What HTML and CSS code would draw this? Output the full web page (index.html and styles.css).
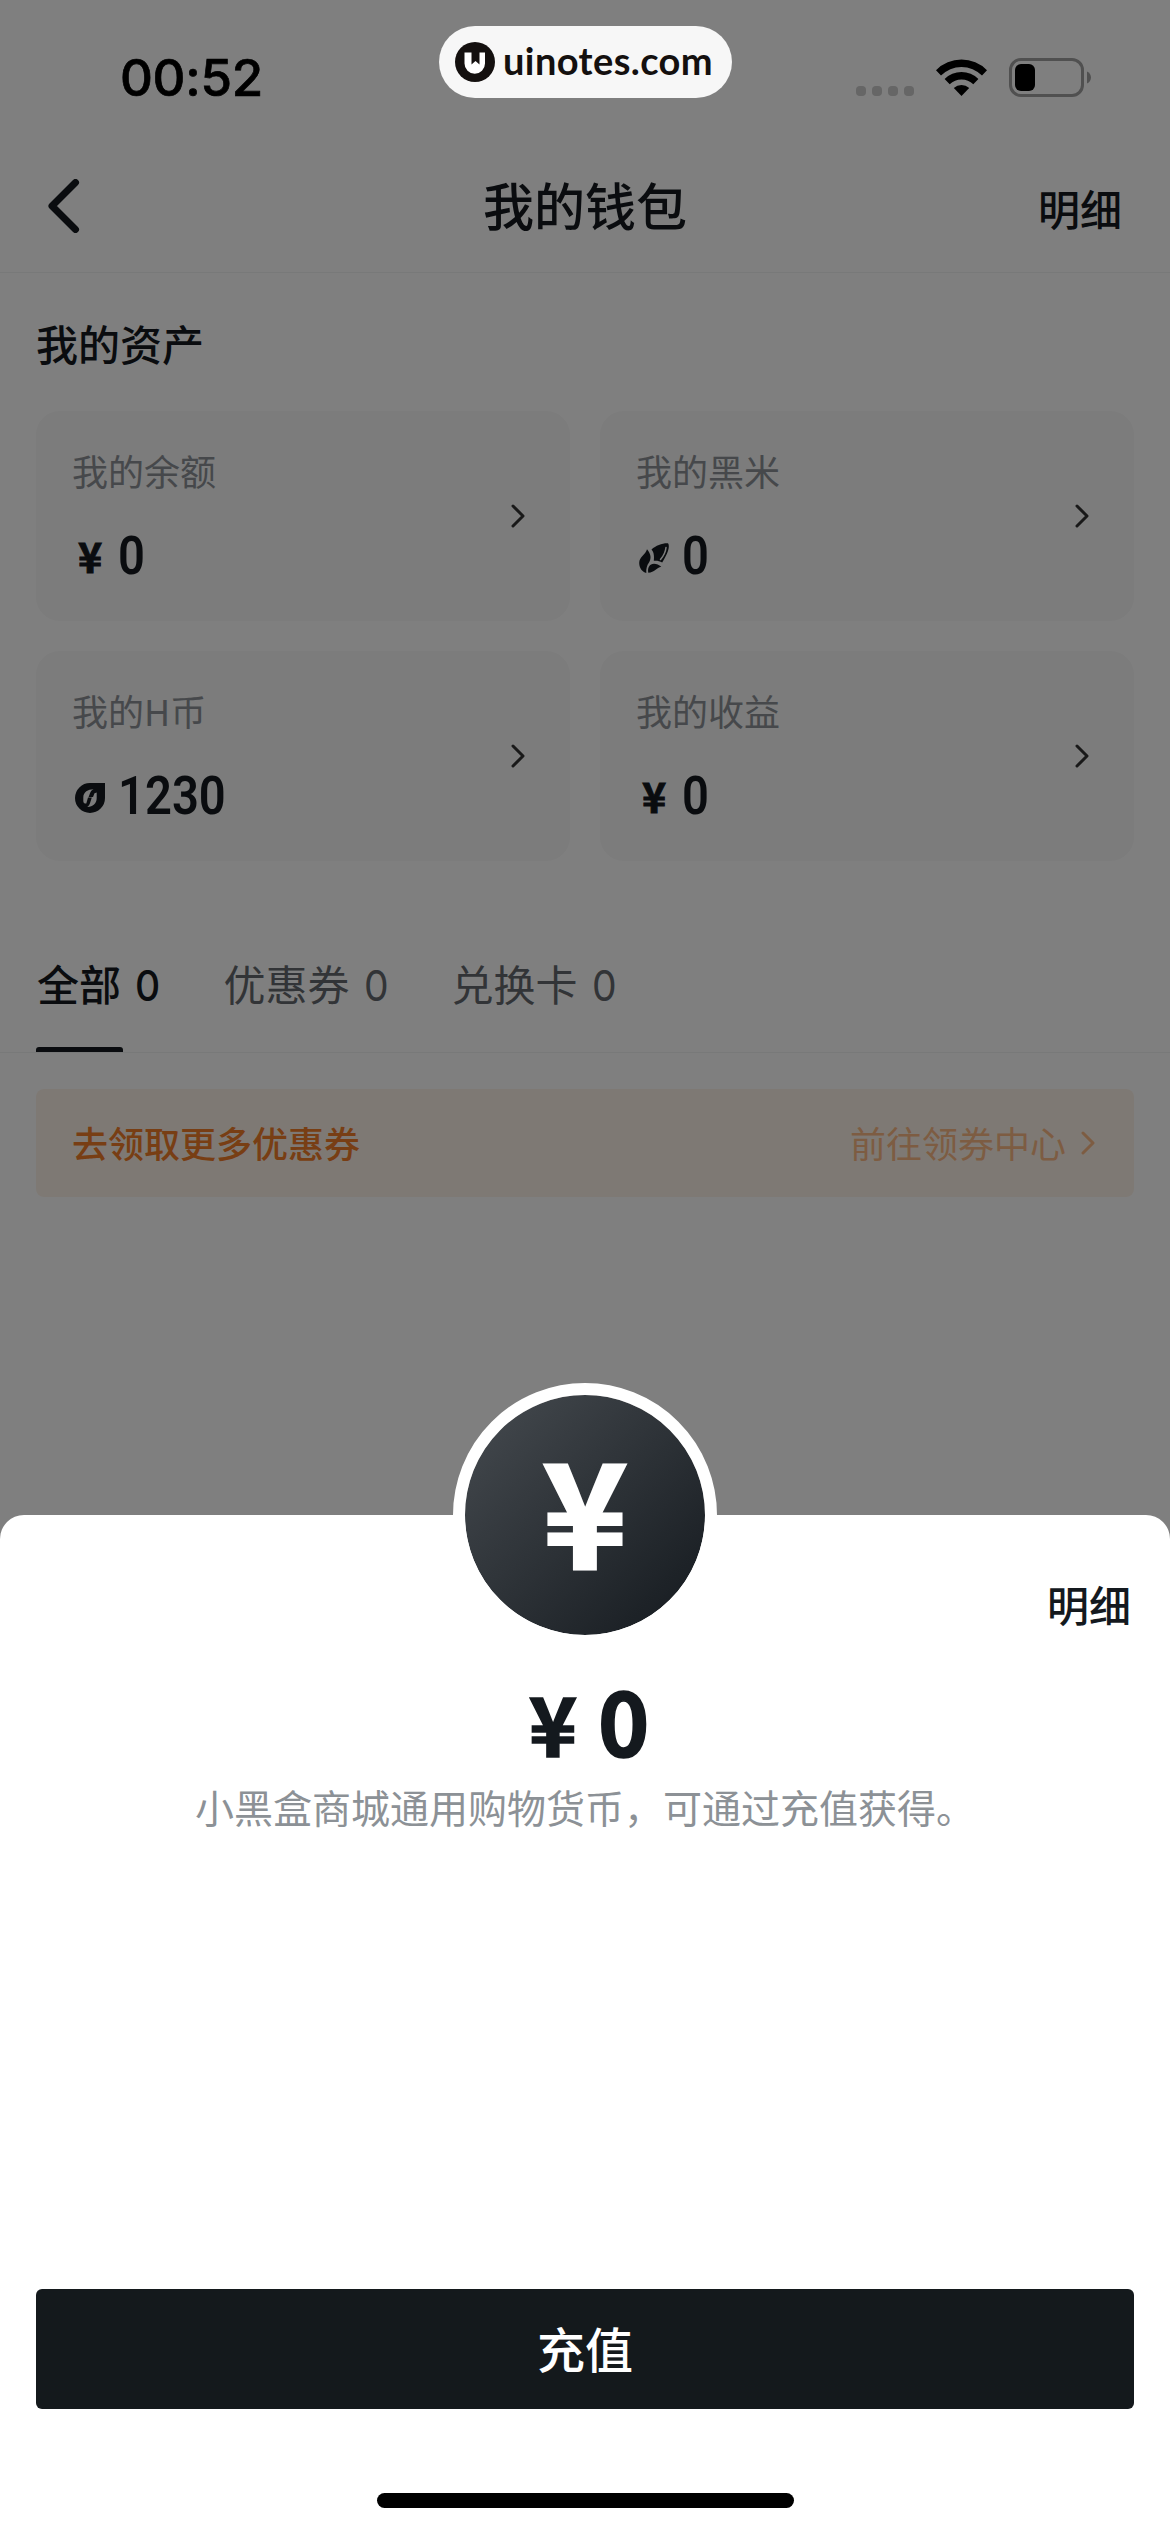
FILE: index.html
```html
<!DOCTYPE html>
<html lang="zh-CN">
<head>
<meta charset="utf-8">
<title>我的钱包</title>
<link rel="stylesheet" href="styles.css">
</head>
<body>
<div class="screen">
  <header class="status">
    <span class="time">00:52</span>
    <div class="indicators">
      <span class="signal"><i></i><i></i><i></i><i></i></span>
      <svg class="wifi" viewBox="0 0 51 37">
        <path d="M0 11.2A36 36 0 0 1 51 11.2L46 16.600A28.500 28.500 0 0 0 5 16.600Z"/>
        <path d="M8.600 19.900A24 24 0 0 1 42.400 19.900L37.300 25.200A17 17 0 0 0 13.700 25.200Z"/>
        <path d="M17.800 29A11.500 11.500 0 0 1 33.200 29L25.500 37Z"/>
      </svg>
      <svg class="battery" viewBox="0 0 83 39">
        <rect class="shell" x="1.500" y="1.500" width="72" height="36" rx="10.500"/>
        <rect x="6" y="6" width="20" height="27" rx="6"/>
        <path class="nub" d="M78 13.500C83.300 15.500 83.300 23.500 78 25.500Z"/>
      </svg>
    </div>
  </header>

  <nav class="navbar">
    <svg class="back" viewBox="0 0 32 54"><path d="M27.500 3.500L4 27L27.500 50.500"/></svg>
    <h1>我的钱包</h1>
    <span class="detail">明细</span>
  </nav>

  <main>
    <h2>我的资产</h2>
    <section class="assets">
      <article class="card">
        <div>
          <p class="label">我的余额</p>
          <p class="value"><span class="unit yen">¥</span><span class="number">0</span></p>
        </div>
        <svg class="chevron" viewBox="0 0 14 24"><path d="M2 2L12 12L2 22"/></svg>
      </article>
      <article class="card">
        <div>
          <p class="label">我的黑米</p>
          <p class="value"><span class="unit"><svg viewBox="0 0 30 30">
            <path d="M12.500 6.500C17 2.500 23.500 0 29 .3C31.500 3.500 28 12 23.200 19.400C20.400 18 17.600 17.300 14.800 17.800C15.200 13.500 15.200 9.500 12.500 6.500Z"/>
            <path d="M8 6.300C12 11 12.600 15.500 10 19.500C7.800 22.500 7 26 7.300 30C3.500 29 .3 25.500 .2 20C.2 14 6.800 11.500 8 6.300Z"/>
            <path d="M9.300 29.700C8.300 24.500 10.500 21 15 20.700C17.600 20.700 20 21.800 22.300 23.700C17.500 24.500 15.500 29.300 9.300 29.700Z"/>
            <path class="gleam" d="M27 4.500C26.600 9 24.500 13 21.500 16.500"/>
          </svg></span><span class="number">0</span></p>
        </div>
        <svg class="chevron" viewBox="0 0 14 24"><path d="M2 2L12 12L2 22"/></svg>
      </article>
      <article class="card">
        <div>
          <p class="label">我的H币</p>
          <p class="value"><span class="unit"><svg viewBox="0 0 30 30">
            <path fill-rule="evenodd" d="M15 0H30V15A15 15 0 1 1 15 0ZM18.500 6.200C13 6.200 8.300 9 8.300 14.500V18C8.300 20 9.500 20.600 11.300 20.500L13 14.600H16.800L15.300 19.300C14.600 21.500 14 23 12.300 24C17.500 24.200 21.700 20.500 21.700 15V9.500L19.500 10.300L18 14H13.600L15 10.200C15.600 8.300 16.800 7 18.500 6.200Z"/>
          </svg></span><span class="number">1230</span></p>
        </div>
        <svg class="chevron" viewBox="0 0 14 24"><path d="M2 2L12 12L2 22"/></svg>
      </article>
      <article class="card">
        <div>
          <p class="label">我的收益</p>
          <p class="value"><span class="unit yen">¥</span><span class="number">0</span></p>
        </div>
        <svg class="chevron" viewBox="0 0 14 24"><path d="M2 2L12 12L2 22"/></svg>
      </article>
    </section>
  </main>

  <div class="tabs">
    <span class="tab active">全部 <b>0</b></span>
    <span class="tab">优惠券 <b>0</b></span>
    <span class="tab">兑换卡 <b>0</b></span>
  </div>

  <div class="banner">
    <strong>去领取更多优惠券</strong>
    <span class="more"><span>前往领券中心</span><svg class="chevron" viewBox="0 0 14 24"><path d="M2 2L12 12L2 22"/></svg></span>
  </div>

  <div class="scrim"></div>

  <div class="watermark">
    <svg viewBox="0 0 40 40"><circle cx="20" cy="20" r="20"/><path class="mark" d="M9.500 10.500H16.500V22.500L20.500 19L24.500 22.500V10.500H30V21.500A10.200 10.200 0 0 1 9.500 21.500Z"/></svg>
    <span>uinotes.com</span>
  </div>

  <section class="sheet">
    <div class="coin">¥</div>
    <span class="sheet-detail">明细</span>
    <p class="amount"><span>¥</span><span class="digit">0</span></p>
    <p class="hint">小黑盒商城通用购物货币，可通过充值获得。</p>
    <button class="recharge">充值</button>
    <div class="home"></div>
  </section>
</div>
</body>
</html>
```
FILE: styles.css
```css
* { box-sizing: border-box; }
body { margin: 0; }
h1, h2, p { margin: 0; font-weight: 500; }

.screen {
  position: relative;
  width: 1170px;
  height: 2532px;
  overflow: hidden;
  background: #fff;
  color: #14191e;
  font-family: "Noto Sans CJK SC", sans-serif;
}

/* status bar */
.status {
  display: flex;
  justify-content: space-between;
  align-items: flex-start;
  height: 141px;
  padding: 58px 78px 0 120px;
  color: #000;
}
.time {
  font: 500 51px/39px Inter, sans-serif;
  letter-spacing: -0.3px;
  -webkit-text-stroke: 0.7px #000;
}
.indicators { display: flex; align-items: flex-start; }
.signal { display: flex; gap: 6px; margin: 28px 22px 0 0; }
.signal i { width: 10px; height: 10px; border-radius: 4px; background: #ccc; }
.wifi { width: 51px; height: 37px; margin: 1px 22px 0 0; }
.battery { width: 83px; height: 39px; }
.shell { fill: none; stroke: #a0a0a0; stroke-width: 3; }
.nub { fill: #a0a0a0; }

/* navigation bar */
.navbar {
  display: grid;
  grid-template-columns: 1fr auto 1fr;
  align-items: center;
  height: 132px;
  padding: 0 48px;
  border-bottom: 1px solid #f1f2f3;
}
.back { width: 32px; height: 54px; margin-bottom: 2px; fill: none; stroke: #14191e; stroke-width: 7; stroke-linecap: round; stroke-linejoin: round; }
.navbar h1 { padding-bottom: 5px; font-size: 51px; line-height: 72px; }
.detail { justify-self: end; padding-top: 2px; font-size: 42px; line-height: 60px; font-weight: 500; }

/* assets */
main { padding: 40px 36px 0; }
h2 { font-size: 42px; line-height: 60px; }
.assets {
  display: grid;
  grid-template-columns: 1fr 1fr;
  gap: 30px;
  margin-top: 38px;
}
.card {
  display: flex;
  justify-content: space-between;
  align-items: center;
  height: 210px;
  padding: 0 45px 0 36px;
  border-radius: 24px;
  background: #f8f8f8;
}
.label { font-size: 36px; line-height: 48px; font-weight: 400; color: #8c9196; }
.value {
  display: flex;
  align-items: center;
  margin-top: 32px;
  font: 600 53px/60px Roboto, sans-serif;
}
.number { transform: scaleX(0.89); transform-origin: left; }
.unit { display: flex; align-items: center; justify-content: center; width: 36px; height: 36px; margin: 4px 10px 0 0; }
.unit svg { width: 30px; height: 30px; fill: #14191e; }
.yen { padding-bottom: 6px; font: 700 41px/30px "Noto Sans CJK SC", sans-serif; -webkit-text-stroke: 1px #14191e; }
.gleam { fill: none; stroke: #f8f8f8; stroke-width: 1.500; stroke-linecap: round; }
.chevron { width: 14px; height: 24px; fill: none; stroke: #333; stroke-width: 3; stroke-linecap: round; stroke-linejoin: round; }

/* coupon tabs */
.tabs {
  display: flex;
  gap: 60px;
  height: 114px;
  margin-top: 78px;
  padding: 14px 36px 0;
  border-bottom: 1px solid #f1f2f3;
}
.tab { position: relative; padding-left: 1px; font-size: 42px; line-height: 60px; color: #64696e; white-space: nowrap; }
.tab b { display: inline-block; margin-left: 5px; font: 400 42px/60px Inter, sans-serif; transform: scaleX(0.93); transform-origin: left; }
.active { color: #14191e; font-weight: 500; }
.tab.active b { font-weight: 500; }
.active::after {
  content: "";
  position: absolute;
  left: 0;
  bottom: 0;
  width: 87px;
  height: 5px;
  border-radius: 3px 3px 0 0;
  background: #14191e;
}

/* coupon banner */
.banner {
  display: flex;
  justify-content: space-between;
  align-items: center;
  height: 108px;
  margin: 36px 36px 0;
  padding: 0 39px 0 36px;
  border-radius: 8px;
  background: #fdf3e9;
  color: #f07d28;
  font-size: 36px;
}
.banner strong { padding-bottom: 3px; font-weight: 500; }
.more { display: flex; align-items: center; gap: 15px; color: #fab984; }
.more span { padding-bottom: 3px; }
.more .chevron { stroke: #fab984; }

.scrim { position: absolute; inset: 0; background: rgba(0, 0, 0, 0.5); }

.watermark {
  position: absolute;
  left: 439px;
  top: 26px;
  display: flex;
  align-items: center;
  gap: 8px;
  width: 293px;
  height: 72px;
  padding-left: 16px;
  border-radius: 36px;
  background: #f7f7f7;
  color: #14100f;
  font: 700 38px/46px Lato, sans-serif;
}
.watermark svg { width: 40px; height: 40px; fill: #14100f; }
.watermark .mark { fill: #fff; }
.watermark span { padding-bottom: 4px; letter-spacing: 0.4px; }

/* bottom sheet */
.sheet {
  position: absolute;
  left: 0;
  right: 0;
  bottom: 0;
  display: flex;
  flex-direction: column;
  align-items: center;
  height: 1017px;
  padding: 0 36px 24px;
  border-radius: 24px 24px 0 0;
  background: #fff;
}
.coin {
  flex: none;
  display: flex;
  align-items: center;
  justify-content: center;
  width: 264px;
  height: 264px;
  margin-top: -132px;
  padding-bottom: 18px;
  border: 12px solid #fff;
  border-radius: 50%;
  background: linear-gradient(135deg, #464b50, #14191e) padding-box;
  color: #fff;
  font: 700 144px/222px "Noto Sans CJK SC", sans-serif;
  -webkit-text-stroke: 3px #fff;
}
.sheet-detail { position: absolute; right: 39px; top: 59px; font-size: 42px; line-height: 60px; font-weight: 500; }
.amount {
  display: flex;
  align-items: baseline;
  gap: 21px;
  height: 104px;
  margin-top: 20px;
  padding-left: 8px;
  font: 700 82px/104px "Noto Sans CJK SC", sans-serif;
  -webkit-text-stroke: 1.6px #14191e;
}
.digit { font-size: 87px; }
.hint { margin-top: 7px; font-size: 39px; line-height: 56px; font-weight: 400; color: #8c9196; white-space: nowrap; }
.recharge {
  width: 100%;
  height: 120px;
  margin-top: auto;
  padding: 0 0 5px;
  border: 0;
  border-radius: 6px;
  background: #14191c;
  color: #fff;
  font: 500 48px/70px "Noto Sans CJK SC", sans-serif;
}
.home { flex: none; width: 417px; height: 15px; margin-top: 84px; border-radius: 8px; background: #000; }
```
